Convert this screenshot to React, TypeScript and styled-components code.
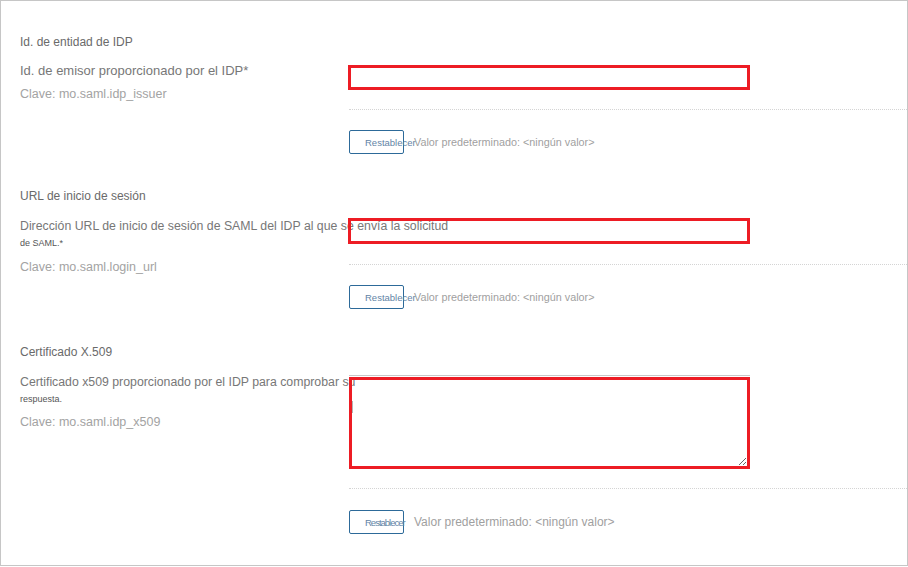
import React from 'react';
import styled, { createGlobalStyle } from 'styled-components';

const Global = createGlobalStyle`
  html, body { margin: 0; padding: 0; background: #ffffff; }
  body { font-family: "Liberation Sans", Arial, sans-serif; }
  * { box-sizing: border-box; }
`;

const Frame = styled.div`
  width: 908px;
  height: 566px;
  border: 1px solid #c6c6c6;
  padding: 34px 0 0 19px;
  overflow: hidden;
  background: #fff;
`;

const Section = styled.section<{ $gap: number }>`
  margin-top: ${(p) => p.$gap}px;
`;

const Title = styled.div`
  font-size: 12px;
  line-height: 14px;
  color: #6a6a6a;
  margin-bottom: 14px;
  white-space: nowrap;
`;

const Field = styled.div`
  display: grid;
  grid-template-columns: 328px 1fr;
  align-items: start;
`;

const LabelCol = styled.div<{ $top: number }>`
  white-space: nowrap;
  padding-top: ${(p) => p.$top}px;
`;

const Label = styled.div<{ $size: number }>`
  font-size: ${(p) => p.$size}px;
  line-height: 16px;
  color: #777777;
`;

const LabelTail = styled.div`
  font-size: 9px;
  line-height: 10px;
  color: #555555;
  margin-top: 4px;
`;

const Key = styled.div<{ $gap: number }>`
  font-size: 12.5px;
  line-height: 15px;
  color: #a3a3a3;
  margin-top: ${(p) => p.$gap}px;
`;

const InputCol = styled.div<{ $top: number }>`
  padding-top: ${(p) => p.$top}px;
`;

const TextInput = styled.input<{ $h: number }>`
  display: block;
  width: 402px;
  height: ${(p) => p.$h}px;
  border: 3px solid #ed1c24;
  background: transparent;
  outline: none;
  padding: 0 4px;
  margin: 0;
`;

const AreaWrap = styled.div`
  position: relative;
  width: 401px;
  margin-left: 1px;
  border-top: 1px solid #c8c8c8;
  padding-top: 1px;
`;

const Area = styled.textarea`
  display: block;
  width: 401px;
  height: 92px;
  border: 3px solid #ed1c24;
  background: transparent;
  outline: none;
  resize: both;
  margin: 0;
  padding: 2px;
`;

const Caret = styled.span`
  position: absolute;
  left: 3px;
  top: 25px;
  width: 1px;
  height: 12px;
  background: #b4b4b4;
`;

const Separator = styled.div<{ $gap: number }>`
  margin-top: ${(p) => p.$gap}px;
  margin-left: 1px;
  border-top: 1px dotted #d4d4d4;
`;

const ResetRow = styled.div<{ $gap: number }>`
  display: flex;
  align-items: center;
  margin-top: ${(p) => p.$gap}px;
  margin-left: 1px;
  height: 24px;
`;

const ResetButton = styled.button<{ $tight?: boolean }>`
  flex: none;
  width: 55px;
  height: 24px;
  border: 1px solid #2d6a99;
  border-radius: 2px;
  background: #fff;
  padding: 0 0 0 15px;
  margin: 0;
  text-align: left;
  white-space: nowrap;
  overflow: visible;
  font-family: "Liberation Sans", Arial, sans-serif;
  font-size: 9.5px;
  letter-spacing: ${(p) => (p.$tight ? '-1px' : '0')};
  color: #6384a6;
`;

const DefaultValue = styled.span<{ $size: number }>`
  margin-left: 10px;
  font-size: ${(p) => p.$size}px;
  color: #9f9f9f;
  white-space: nowrap;
`;

export default function App() {
  return (
    <>
      <Global />
      <Frame>
        <Section $gap={0}>
          <Title>Id. de entidad de IDP</Title>
          <Field>
            <LabelCol $top={0}>
              <Label $size={13}>Id. de emisor proporcionado por el IDP*</Label>
              <Key $gap={8}>Clave: mo.saml.idp_issuer</Key>
            </LabelCol>
            <InputCol $top={2}>
              <TextInput $h={25} />
              <Separator $gap={19} />
              <ResetRow $gap={20}>
                <ResetButton>Restablecer</ResetButton>
                <DefaultValue $size={10.8}>Valor predeterminado: &lt;ningún valor&gt;</DefaultValue>
              </ResetRow>
            </InputCol>
          </Field>
        </Section>

        <Section $gap={35}>
          <Title>URL de inicio de sesión</Title>
          <Field>
            <LabelCol $top={1}>
              <Label $size={12.3}>Dirección URL de inicio de sesión de SAML del IDP al que se envía la solicitud</Label>
              <LabelTail>de SAML.*</LabelTail>
              <Key $gap={12}>Clave: mo.saml.login_url</Key>
            </LabelCol>
            <InputCol $top={1}>
              <TextInput $h={26} />
              <Separator $gap={20} />
              <ResetRow $gap={20}>
                <ResetButton>Restablecer</ResetButton>
                <DefaultValue $size={10.8}>Valor predeterminado: &lt;ningún valor&gt;</DefaultValue>
              </ResetRow>
            </InputCol>
          </Field>
        </Section>

        <Section $gap={36}>
          <Title>Certificado X.509</Title>
          <Field>
            <LabelCol $top={1}>
              <Label $size={12.3}>Certificado x509 proporcionado por el IDP para comprobar su</Label>
              <LabelTail>respuesta.</LabelTail>
              <Key $gap={11}>Clave: mo.saml.idp_x509</Key>
            </LabelCol>
            <InputCol $top={2}>
              <AreaWrap>
                <Area />
                <Caret />
              </AreaWrap>
              <Separator $gap={19} />
              <ResetRow $gap={21}>
                <ResetButton $tight>Restablecer</ResetButton>
                <DefaultValue $size={12}>Valor predeterminado: &lt;ningún valor&gt;</DefaultValue>
              </ResetRow>
            </InputCol>
          </Field>
        </Section>
      </Frame>
    </>
  );
}
